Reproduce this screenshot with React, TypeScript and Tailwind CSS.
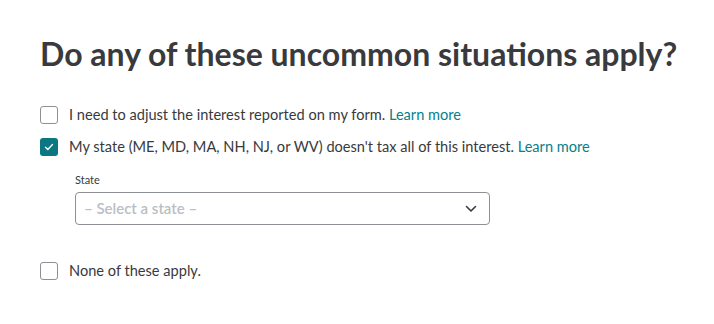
import React from 'react';

const Check: React.FC<{ checked?: boolean }> = ({ checked }) => (
  <span
    className={
      checked
        ? 'flex h-[18px] w-[18px] shrink-0 items-center justify-center rounded-[3px] bg-[#0a7782]'
        : 'h-[18px] w-[18px] shrink-0 rounded-[3px] border border-[#8d9096] bg-white'
    }
  >
    {checked && (
      <svg width="10" height="8" viewBox="0 0 10 8" fill="none">
        <path d="M1.5 4.2 3.8 6.4 8.5 1.6" stroke="white" strokeWidth="1.4" strokeLinecap="round" strokeLinejoin="round" />
      </svg>
    )}
  </span>
);

export default function App() {
  return (
    <div className="h-[324px] w-[714px] bg-white pl-[40px] pt-[34px] text-[#393a3d]" style={{ fontFamily: 'Lato, "Open Sans", sans-serif' }}>
      <h1 className="text-[32px] font-bold leading-[40px]">Do any of these uncommon situations apply?</h1>

      <div className="mt-[25px] flex flex-col text-[14.6px]">
        <label className="flex h-[32px] items-center gap-[11px]">
          <Check />
          <span>
            I need to adjust the interest reported on my form. <a className="text-[#05818b]">Learn more</a>
          </span>
        </label>
        <label className="flex h-[32px] items-center gap-[11px]">
          <Check checked />
          <span>
            My state (ME, MD, MA, NH, NJ, or WV) doesn't tax all of this interest. <a className="text-[#05818b]">Learn more</a>
          </span>
        </label>

        <div className="ml-[35px] mt-[9px] flex flex-col">
          <span className="text-[11px] leading-[16px]">State</span>
          <div className="mt-[4px] flex h-[33px] w-[415px] items-center justify-between rounded-[4px] border border-[#8d9096] pl-[8px] pr-[12px]">
            <span className="text-[15px] font-semibold text-[#babec5]">– Select a state –</span>
            <svg width="12" height="8" viewBox="0 0 12 8" fill="none">
              <path d="M1.5 1.5 6 6 10.5 1.5" stroke="#393a3d" strokeWidth="1.6" strokeLinecap="round" strokeLinejoin="round" />
            </svg>
          </div>
        </div>

        <label className="mt-[30px] flex h-[32px] items-center gap-[11px]">
          <Check />
          <span>None of these apply.</span>
        </label>
      </div>
    </div>
  );
}
